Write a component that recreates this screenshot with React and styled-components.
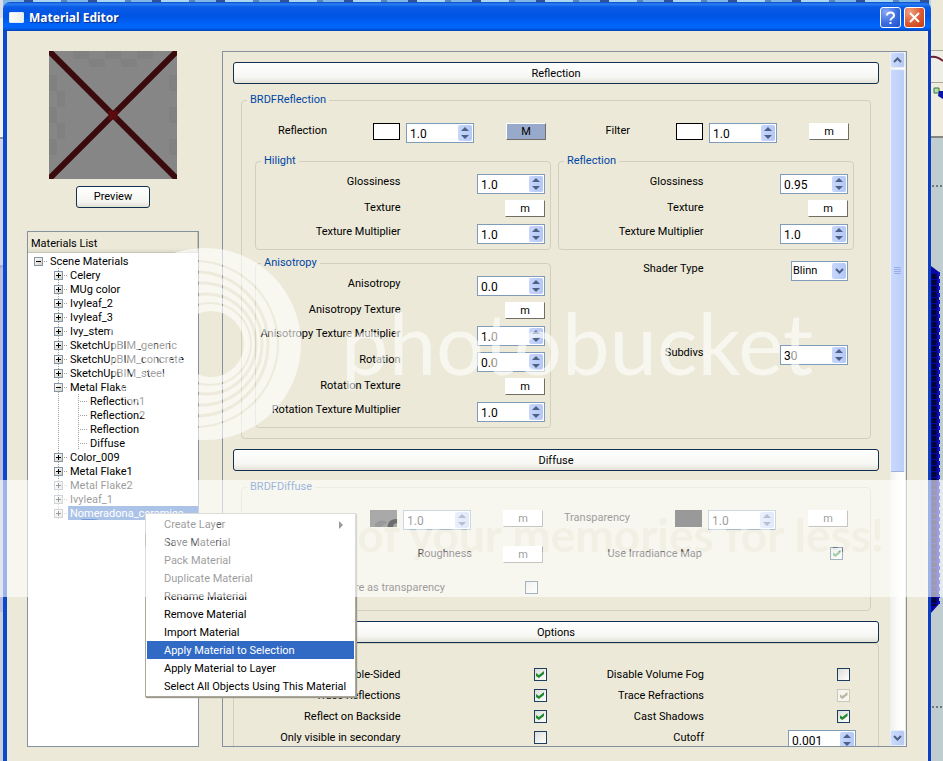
import React, { useId } from "react";
import styled, { createGlobalStyle, css } from "styled-components";

const Global = createGlobalStyle`
  *, *::before, *::after { box-sizing: border-box; }
  html, body { margin: 0; height: 100%; overflow: hidden; }
  body, button, input, select {
    font-family: Roboto, "Noto Sans", sans-serif;
    font-size: 11px;
    line-height: 14px;
    color: #000;
  }
  label { padding-top: 1px; }
`;

/* ---------- desktop and window frame ---------- */

const Desktop = styled.div`
  position: relative;
  height: 100vh;
  overflow: hidden;
  display: grid;
  grid-template-columns: 3px minmax(0, 1fr) 12px;
  background: #b9c9d2;
`;

const LeftEdge = styled.div`
  background: linear-gradient(#d9dde6 0 18px, #f2f1ee 18px 137px, #8c919c 137px 139px, #cfd2ea 139px 265px, #a8acd0 265px 268px, #b9bcdc 268px 612px, #c9d0dc 612px);
`;

const RightEdge = styled.div`
  overflow: hidden;
  background: linear-gradient(#ece9d8 0 50px, #a9a898 50px 51px, #efeee6 51px 82px, #a9a898 82px 83px, #efecdf 83px 136px, #84867f 136px 138px, #bfcdd0 138px);
`;

const Window = styled.div`
  display: flex;
  flex-direction: column;
  min-width: 0;
  min-height: 0;
  padding-top: 2px;
  background: repeating-linear-gradient(90deg, #7fb8e4 0 21px, #2f5298 21px 30px, #a9d6f0 30px 58px, #5a86c0 58px 64px);
`;

const TitleBar = styled.header`
  display: flex;
  align-items: center;
  gap: 3px;
  height: 29px;
  padding: 2px 6px 0 6px;
  border-radius: 7px 7px 0 0;
  background: linear-gradient(#0a47c8 0, #2a80f4 2px, #0a5be6 5px, #0054e3 14px, #0066ff 24px, #0062f4 26px, #0043b8 29px);
`;

const AppIcon = styled.span`
  width: 15px;
  height: 11px;
  border: 1px solid #dcebff;
  border-radius: 1px;
  background: linear-gradient(90deg, #fff, #e9efe4);
  margin-right: 2px;
`;

const Title = styled.h1`
  flex: 1;
  margin: 0;
  padding-top: 1px;
  color: #fff;
  font: bold 12px/16px "Noto Sans", sans-serif;
  text-shadow: 1px 1px 1px #0a2f86;
`;

const CaptionButton = styled.button`
  display: grid;
  place-items: center;
  width: 21px;
  height: 21px;
  padding: 0;
  border: 1px solid #fff;
  border-radius: 3px;
  background: ${(p) =>
    p.$danger
      ? "radial-gradient(circle at 25% 20%, #f0a080, #dc5a32 55%, #c23c10)"
      : "radial-gradient(circle at 25% 20%, #86a8f4, #3a6ce0 55%, #1e50cc)"};
`;

const Body = styled.main`
  flex: 1;
  min-height: 0;
  display: flex;
  gap: 23px;
  padding: 20px 21px 14px 20px;
  border-left: 4px solid #0a48cc;
  border-right: 3px solid #0b3fc0;
  box-shadow: inset -3px 0 0 #efecdf;
  background: #ece9d8;
`;

/* ---------- left column ---------- */

const Sidebar = styled.aside`
  flex: none;
  width: 172px;
  display: flex;
  flex-direction: column;
  align-items: center;
`;

const Thumb = styled.svg`
  display: block;
  width: 128px;
  height: 128px;
`;

const PreviewButton = styled.button`
  width: 74px;
  height: 22px;
  margin: 7px 0 23px;
  padding: 0;
  border: 1px solid #12304f;
  border-radius: 3px;
  background: linear-gradient(#fff, #f4f4f0 75%, #e2dfd4);
`;

const ListBox = styled.section`
  flex: 1;
  align-self: stretch;
  border: 1px solid #85919c;
  background: #fff;
`;

const ListHeader = styled.h2`
  margin: 0;
  height: 21px;
  padding: 5px 3px 2px;
  border-bottom: 1px solid #cbc7b8;
  border-right: 1px solid #c6c3b4;
  background: linear-gradient(#ece9d8 80%, #dedbcb);
  font-size: 11px;
  font-weight: normal;
`;

const Tree = styled.ul`
  margin: 0;
  padding: 1px 0 0;
  list-style: none;
`;

const TreeRow = styled.li`
  position: relative;
  display: flex;
  height: 14px;
`;

const dottedColumn = css`
  background: repeating-linear-gradient(#a0a0a0 0 1px, transparent 1px 2px) 10px 0 / 1px 100% no-repeat;
`;

const Guide = styled.span`
  flex: none;
  width: 20px;
  ${(p) => p.$line && dottedColumn}
`;

const Branch = styled.span`
  flex: none;
  display: flex;
  align-items: center;
  width: 20px;
  padding-left: ${(p) => (p.$leaf ? 11 : 6)}px;
  ${(p) => p.$line && dottedColumn}
  &::after {
    content: "";
    flex: 1;
    height: 1px;
    margin-right: 1px;
    background: repeating-linear-gradient(90deg, transparent 0 1px, #a0a0a0 1px 2px);
  }
`;

const Toggle = styled.button`
  flex: none;
  width: 9px;
  height: 9px;
  padding: 0;
  border: 1px solid #8496a8;
  background:
    linear-gradient(#000, #000) center / 5px 1px no-repeat,
    linear-gradient(#000, #000) center / ${(p) => (p.$open ? "0 0" : "1px 5px")} no-repeat,
    linear-gradient(135deg, #fff, #d2cec0);
`;

const NodeName = styled.span`
  padding: 1px 0 0 2px;
  white-space: nowrap;
  ${(p) =>
    p.$selected &&
    css`
      flex: 1;
      min-width: 0;
      overflow: hidden;
      background: #316ac5;
      color: #fff;
    `}
`;

/* ---------- context menu ---------- */

const Menu = styled.ul`
  position: absolute;
  z-index: 3;
  left: 117px;
  top: 7px;
  width: 211px;
  margin: 0;
  padding: 1px;
  list-style: none;
  border: 1px solid #aca899;
  background: #fff;
  box-shadow: 1px 1px 1px #9a988c;
`;

const MenuItem = styled.button`
  display: flex;
  justify-content: space-between;
  align-items: center;
  width: 100%;
  height: 18px;
  padding: 1px 9px 0 17px;
  border: 0;
  text-align: left;
  white-space: nowrap;
  background: ${(p) => (p.$active ? "#316ac5" : "none")};
  color: ${(p) => (p.$active ? "#fff" : "#000")};
`;

/* ---------- settings pane ---------- */

const Pane = styled.section`
  flex: 1;
  min-width: 0;
  display: flex;
  border: 1px solid #85919c;
  padding-right: 1px;
  overflow: hidden;
`;

const Settings = styled.div`
  flex: 1;
  min-width: 0;
  overflow: hidden;
  padding: 10px 11px 0 10px;
`;

const SectionBar = styled.button`
  display: block;
  width: 100%;
  height: 22px;
  padding: 1px 0 0;
  border: 1px solid #12304f;
  border-radius: 3px;
  background: linear-gradient(#fff, #f6f6f3 70%, #e4e2d8);
`;

const Group = styled.fieldset`
  min-width: 0;
  margin: 0;
  padding: 6px 5px 5px 0;
  border: 1px solid #d0d0bf;
  border-radius: 4px;
`;

const Caption = styled.legend`
  margin-left: ${(p) => (p.$outer ? -8 : 5)}px;
  padding: 0 3px;
  color: #0046a5;
`;

const BrdfGroup = styled(Group)`
  margin: 9px 8px 10px;
  padding: 16px 16px ${(p) => p.$bottom}px 13px;
`;

const OptionsGroup = styled(Group)`
  display: grid;
  grid-template-columns: 1fr 1fr;
  align-items: start;
  column-gap: 7px;
  padding: 23px 22px 20px 16px;
`;

const Columns = styled.div`
  display: grid;
  grid-template-columns: 1fr 1fr;
  column-gap: 7px;
  row-gap: ${(p) => p.$rowGap}px;
  align-items: start;
`;

const Stack = styled.div`
  display: grid;
  gap: ${(p) => p.$gap || 6}px;
  ${(p) => p.$plain && "padding: 5px 6px 0 1px;"}
`;

const Row = styled.div`
  display: grid;
  grid-template-columns: 1fr 1fr;
  height: ${(p) => (p.$short ? 18 : 20)}px;
  align-items: start;
  > label { text-align: right; white-space: nowrap; justify-self: end; }
  > :last-child { justify-self: end; }
`;

const MapRow = styled.div`
  display: flex;
  height: 20px;
  padding-right: ${(p) => p.$end}px;
  > label { flex: none; width: 72px; text-align: right; white-space: nowrap; margin-right: auto; }
`;

const PairRow = styled.div`
  display: flex;
  justify-content: flex-end;
  align-items: start;
  gap: ${(p) => p.$gap}px;
  height: ${(p) => p.$height}px;
  padding-right: ${(p) => p.$end}px;
  white-space: nowrap;
`;

const Swatch = styled.button`
  width: 27px;
  height: 17px;
  margin-right: 6px;
  padding: 0;
  border: 1px solid #000;
  background: ${(p) => p.$fill || "#fff"};
`;

const MapButton = styled.button`
  width: 40px;
  height: 17px;
  padding: 1px 0 0;
  border: 1px solid;
  border-color: #fff #716f64 #716f64 #fff;
  background: ${(p) => (p.$on ? "#98aacb" : "#fff")};
  margin-left: ${(p) => p.$gap || 0}px;
`;

const SpinBox = styled.span`
  flex: none;
  display: flex;
  width: 68px;
  height: 20px;
  border: 1px solid #7f9db9;
  background: #fff;
`;

const SpinInput = styled.input`
  flex: 1;
  min-width: 0;
  padding: 1px 0 0 3px;
  border: 0;
  background: none;
  outline: 0;
  font-size: 12px;
`;

const Stepper = styled.span`
  flex: none;
  display: grid;
  grid-template-rows: 1fr 1fr;
  width: 14px;
  margin: 1px;
  border-radius: 2px;
  background: linear-gradient(90deg, #c8d6fb, #b4c8f6);
`;

const StepButton = styled.button`
  display: grid;
  place-items: center;
  padding: 0;
  border: 0;
  background: none;
`;

const Check = styled.input`
  appearance: none;
  flex: none;
  display: grid;
  place-items: center;
  width: 13px;
  height: 13px;
  margin: 1px 0 0;
  border: 1px solid #1c3f60;
  background: linear-gradient(135deg, #dcdcd7, #fff);
  &:checked::before {
    content: "";
    width: 8px;
    height: 7px;
    background: #218a31;
    clip-path: polygon(0 28%, 36% 58%, 100% 0, 100% 42%, 36% 100%, 0 70%);
  }
  &:disabled { border-color: #cac8bb; background: #f6f5ee; }
  &:disabled::before { background: #bab8a8; }
`;

const SelectBox = styled.span`
  display: flex;
  position: relative;
  width: 57px;
  height: 20px;
  border: 1px solid #7f9db9;
  background: #fff;
`;

const SelectInput = styled.select`
  appearance: none;
  width: 100%;
  padding: 0 16px 0 1px;
  border: 0;
  background: none;
  outline: 0;
`;

const SelectArrow = styled.span`
  position: absolute;
  right: 1px;
  top: 1px;
  bottom: 1px;
  width: 14px;
  display: grid;
  place-items: center;
  border-radius: 2px;
  background: linear-gradient(90deg, #c8d6fb, #b4c8f6);
  pointer-events: none;
`;

/* ---------- scroll bar ---------- */

const ScrollBar = styled.div`
  flex: none;
  width: 15px;
  display: flex;
  flex-direction: column;
  background: linear-gradient(90deg, #f0f1ec, #fdfdfb 60%, #fff);
`;

const ScrollButton = styled.button`
  flex: none;
  display: grid;
  place-items: center;
  width: 15px;
  height: 16px;
  padding: 0;
  border: 1px solid #e6eefc;
  border-radius: 2px;
  background: linear-gradient(90deg, #cddcfd, #b6c9f4);
`;

const ScrollThumb = styled.div`
  flex: 0 0 58%;
  display: grid;
  place-items: center;
  margin: 1px 0 auto;
  border: 1px solid #eaf0fd;
  border-bottom-color: #98b0e4;
  border-radius: 2px;
  background: linear-gradient(90deg, #c9d8fc, #bccffa);
`;

const Watermark = styled.svg`
  position: absolute;
  z-index: 5;
  left: 0;
  top: 0;
  width: 100%;
  height: 100%;
  pointer-events: none;
`;

/* ---------- composed parts ---------- */

function Chevron({ up }) {
  return (
    <svg width="9" height="6" viewBox="0 0 9 6" aria-hidden="true">
      <path d={up ? "M1 5 4.5 1.5 8 5" : "M1 1 4.5 4.5 8 1"} fill="none" stroke="#4d6185" strokeWidth="2" />
    </svg>
  );
}

function Spin({ id, value }) {
  return (
    <SpinBox>
      <SpinInput id={id} type="text" defaultValue={value} />
      <Stepper>
        <StepButton aria-label="Increase">
          <svg width="8" height="4" viewBox="0 0 8 4"><path d="M0 4 4 0 8 4Z" fill="#4d6185" /></svg>
        </StepButton>
        <StepButton aria-label="Decrease">
          <svg width="8" height="4" viewBox="0 0 8 4"><path d="M0 0 4 4 8 0Z" fill="#4d6185" /></svg>
        </StepButton>
      </Stepper>
    </SpinBox>
  );
}

function SpinRow({ label, value }) {
  const id = useId();
  return (
    <Row>
      <label htmlFor={id}>{label}</label>
      <Spin id={id} value={value} />
    </Row>
  );
}

function TextureRow({ label }) {
  const id = useId();
  return (
    <Row $short>
      <label htmlFor={id}>{label}</label>
      <MapButton id={id}>m</MapButton>
    </Row>
  );
}

function ColorRow({ label, end, on, fill, children }) {
  const id = useId();
  return (
    <MapRow $end={end}>
      <label htmlFor={id}>{label}</label>
      {children || <Swatch $fill={fill} aria-label={`${label} color`} />}
      <Spin id={id} value="1.0" />
      <MapButton $gap={32} $on={on} aria-label={`${label} map`}>{on ? "M" : "m"}</MapButton>
    </MapRow>
  );
}

function CheckPair({ label, gap, end, height, ...rest }) {
  const id = useId();
  return (
    <PairRow $gap={gap} $end={end} $height={height}>
      <label htmlFor={id}>{label}</label>
      <Check id={id} type="checkbox" {...rest} />
    </PairRow>
  );
}

const MapThumb = styled.svg`
  flex: none;
  width: 27px;
  height: 17px;
  margin-right: 6px;
`;

const nodes = [
  ["Scene Materials", 0, "open"],
  ["Celery", 1, "shut"],
  ["MUg color", 1, "shut"],
  ["Ivyleaf_2", 1, "shut"],
  ["Ivyleaf_3", 1, "shut"],
  ["Ivy_stem", 1, "shut"],
  ["SketchUpBIM_generic", 1, "shut"],
  ["SketchUpBIM_concrete", 1, "shut"],
  ["SketchUpBIM_steel", 1, "shut"],
  ["Metal Flake", 1, "open"],
  ["Reflection1", 2],
  ["Reflection2", 2],
  ["Reflection", 2],
  ["Diffuse", 2],
  ["Color_009", 1, "shut"],
  ["Metal Flake1", 1, "shut"],
  ["Metal Flake2", 1, "shut"],
  ["Ivyleaf_1", 1, "shut"],
  ["Nomeradona_ceramica", 1, "shut", true],
];

const commands = [
  "Create Layer",
  "Save Material",
  "Pack Material",
  "Duplicate Material",
  "Rename Material",
  "Remove Material",
  "Import Material",
  "Apply Material to Selection",
  "Apply Material to Layer",
  "Select All Objects Using This Material",
];

function ContextMenu() {
  return (
    <Menu role="menu">
      {commands.map((name, i) => (
        <li key={name} role="none">
          <MenuItem role="menuitem" $active={i === 7}>
            {name}
            {i === 0 && (
              <svg width="8" height="8" viewBox="0 0 8 8"><path d="M2 0 6 4 2 8Z" fill="#000" /></svg>
            )}
          </MenuItem>
        </li>
      ))}
    </Menu>
  );
}

function MaterialTree() {
  return (
    <Tree>
      {nodes.map(([name, depth, state, selected]) => (
        <TreeRow key={name + depth}>
          {Array.from({ length: depth }, (_, d) => (
            <Guide key={d} $line={d === 1} />
          ))}
          <Branch $leaf={!state} $line={depth > 0}>
            {state && <Toggle $open={state === "open"} aria-label={`Toggle ${name}`} />}
          </Branch>
          <NodeName $selected={selected}>{name}</NodeName>
          {selected && <ContextMenu />}
        </TreeRow>
      ))}
    </Tree>
  );
}

function ReflectionSection() {
  const shader = useId();
  return (
    <BrdfGroup $bottom={10}>
      <Caption $outer>BRDFReflection</Caption>
      <Stack $gap={11}>
        <Columns $rowGap={0}>
          <ColorRow label="Reflection" end={5} on />
          <ColorRow label="Filter" end={5} />
        </Columns>
        <Columns $rowGap={6}>
          <Group>
            <Caption>Hilight</Caption>
            <Stack>
              <SpinRow label="Glossiness" value="1.0" />
              <TextureRow label="Texture" />
              <SpinRow label="Texture Multiplier" value="1.0" />
            </Stack>
          </Group>
          <Group>
            <Caption>Reflection</Caption>
            <Stack>
              <SpinRow label="Glossiness" value="0.95" />
              <TextureRow label="Texture" />
              <SpinRow label="Texture Multiplier" value="1.0" />
            </Stack>
          </Group>
          <Group>
            <Caption>Anisotropy</Caption>
            <Stack>
              <SpinRow label="Anisotropy" value="0.0" />
              <TextureRow label="Anisotropy Texture" />
              <SpinRow label="Anisotropy Texture Multiplier" value="1.0" />
              <SpinRow label="Rotation" value="0.0" />
              <TextureRow label="Rotation Texture" />
              <SpinRow label="Rotation Texture Multiplier" value="1.0" />
            </Stack>
          </Group>
          <Stack $plain $gap={64}>
            <Row>
              <label htmlFor={shader}>Shader Type</label>
              <SelectBox>
                <SelectInput id={shader} defaultValue="Blinn">
                  <option>Blinn</option>
                </SelectInput>
                <SelectArrow><Chevron /></SelectArrow>
              </SelectBox>
            </Row>
            <SpinRow label="Subdivs" value="30" />
          </Stack>
        </Columns>
      </Stack>
    </BrdfGroup>
  );
}

function DiffuseSection() {
  const rough = useId();
  return (
    <BrdfGroup $bottom={16}>
      <Caption $outer>BRDFDiffuse</Caption>
      <Columns $rowGap={16}>
        <ColorRow label="Color" end={8}>
          <MapThumb viewBox="0 0 27 17" role="img" aria-label="Color texture">
            <rect width="27" height="17" fill="#2a2a2a" />
            <path d="M5 17V14Q9 9 15 11Q19 13 14 14L11 17Z" fill="#000" />
          </MapThumb>
        </ColorRow>
        <ColorRow label="Transparency" end={6} fill="#000" />
        <PairRow $gap={31} $end={8} $height={18}>
          <label htmlFor={rough}>Roughness</label>
          <MapButton id={rough}>m</MapButton>
        </PairRow>
        <CheckPair label="Use Irradiance Map" gap={128} end={11} height={18} defaultChecked />
        <CheckPair label="Use color texture as transparency" gap={80} end={13} height={14} />
      </Columns>
    </BrdfGroup>
  );
}

function OptionsSection() {
  const cutoff = useId();
  return (
    <OptionsGroup>
      <Stack $gap={7}>
        <CheckPair label="Double-Sided" gap={133} end={3} height={14} defaultChecked />
        <CheckPair label="Trace Reflections" gap={133} end={3} height={14} defaultChecked />
        <CheckPair label="Reflect on Backside" gap={133} end={3} height={14} defaultChecked />
        <CheckPair label="Only visible in secondary" gap={133} end={3} height={14} />
      </Stack>
      <Stack $gap={7}>
        <CheckPair label="Disable Volume Fog" gap={133} end={6} height={14} />
        <CheckPair label="Trace Refractions" gap={133} end={6} height={14} defaultChecked disabled />
        <CheckPair label="Cast Shadows" gap={133} end={6} height={14} defaultChecked />
        <PairRow $gap={84} $end={0} $height={20}>
          <label htmlFor={cutoff}>Cutoff</label>
          <Spin id={cutoff} value="0.001" />
        </PairRow>
      </Stack>
    </OptionsGroup>
  );
}

function WatermarkArt() {
  return (
    <Watermark aria-hidden="true">
      <defs>
        <mask id="bandMask">
          <rect width="100%" height="100%" fill="#fff" />
          <text x="884" y="552" textAnchor="end" fontFamily="Lato, sans-serif" fontWeight="bold" fontSize="46" fill="#888">
            Protect more of your memories for less!
          </text>
        </mask>
        <mask id="ringMask">
          <circle cx="205" cy="344" r="96" fill="#fff" />
          <g fill="none" stroke="#333">
            <circle cx="195" cy="344" r="83" strokeWidth="2" />
            <circle cx="196" cy="344" r="72" strokeWidth="3" />
            <circle cx="201" cy="344" r="61" strokeWidth="3" />
            <circle cx="206" cy="344" r="50" strokeWidth="3" />
            <circle cx="210" cy="344" r="41" strokeWidth="2" />
          </g>
          <circle cx="211" cy="344" r="33" fill="#000" />
        </mask>
      </defs>
      <rect y="480" width="100%" height="117" fill="#fff" fillOpacity="0.6" mask="url(#bandMask)" />
      <rect x="100" y="240" width="220" height="210" fill="#fff" fillOpacity="0.62" mask="url(#ringMask)" />
      <text x="341" y="375" fontFamily="Lato, sans-serif" fontSize="85" fill="#fff" fillOpacity="0.6">
        photobucket
      </text>
    </Watermark>
  );
}

export default function App() {
  return (
    <Desktop>
      <Global />
      <LeftEdge />
      <Window>
        <TitleBar>
          <AppIcon />
          <Title>Material Editor</Title>
          <CaptionButton aria-label="Help">
            <svg width="11" height="14" viewBox="0 0 11 14">
              <path d="M2 4.5Q2 1.5 5.5 1.5T9 4.5Q9 6 7.2 7T5.5 9.5M5.5 11V13" fill="none" stroke="#fff" strokeWidth="2" />
            </svg>
          </CaptionButton>
          <CaptionButton $danger aria-label="Close">
            <svg width="13" height="13" viewBox="0 0 13 13">
              <path d="M2 2 11 11M11 2 2 11" fill="none" stroke="#fff" strokeWidth="2" />
            </svg>
          </CaptionButton>
        </TitleBar>
        <Body>
          <Sidebar>
            <Thumb viewBox="0 0 128 128" role="img" aria-label="Empty preview">
              <rect width="128" height="128" fill="#868686" />
              <path
                d="M24 0h16v8H24zM56 0h16v8H56zM88 0h16v8H88zM0 24h8v16H0zM0 56h8v16H0zM0 88h8v16H0zM120 24h8v16h-8zM120 56h8v16h-8zM120 88h8v16h-8zM40 8h16v8H40zM72 8h16v8H72zM8 40h8v16H8zM8 72h8v16H8z"
                fill="#818181"
              />
              <path d="M0 0 128 128M128 0 0 128" stroke="#3a0a0c" strokeWidth="6" />
              <path d="M60 60 68 68M68 60 60 68" stroke="#5c0c0e" strokeWidth="4" />
            </Thumb>
            <PreviewButton>Preview</PreviewButton>
            <ListBox>
              <ListHeader>Materials List</ListHeader>
              <MaterialTree />
            </ListBox>
          </Sidebar>
          <Pane>
            <Settings>
              <SectionBar>Reflection</SectionBar>
              <ReflectionSection />
              <SectionBar>Diffuse</SectionBar>
              <DiffuseSection />
              <SectionBar>Options</SectionBar>
              <OptionsSection />
            </Settings>
            <ScrollBar>
              <ScrollButton aria-label="Scroll up"><Chevron up /></ScrollButton>
              <ScrollThumb>
                <svg width="7" height="7" viewBox="0 0 7 7">
                  <path d="M0 .5H7M0 2.5H7M0 4.5H7M0 6.5H7" stroke="#96aeea" />
                </svg>
              </ScrollThumb>
              <ScrollButton aria-label="Scroll down"><Chevron /></ScrollButton>
            </ScrollBar>
          </Pane>
        </Body>
      </Window>
      <RightEdge>
        <svg width="12" height="761" viewBox="0 0 12 761" aria-hidden="true">
          <path d="M0 57Q6 56 12 61" fill="none" stroke="#6b2030" strokeWidth="2" />
          <path d="M3 88h5v5H3z" fill="#b8dcb0" stroke="#2f7a36" />
          <path d="M8 91h4v8l-5-3z" fill="#0a14a8" />
          <path d="M1 186h2M5 186h2M9 186h2M1 707h2M5 707h2M9 707h2" stroke="#222" />
          <path d="M0 266 8 272V604L0 613Z" fill="#0808a0" />
          <path d="M3 274V606" stroke="#04043c" strokeWidth="5" strokeDasharray="5 1" />
          <path d="M8 272V604" stroke="#1414c8" strokeDasharray="4 3" strokeWidth="2" />
        </svg>
      </RightEdge>
      <WatermarkArt />
    </Desktop>
  );
}
